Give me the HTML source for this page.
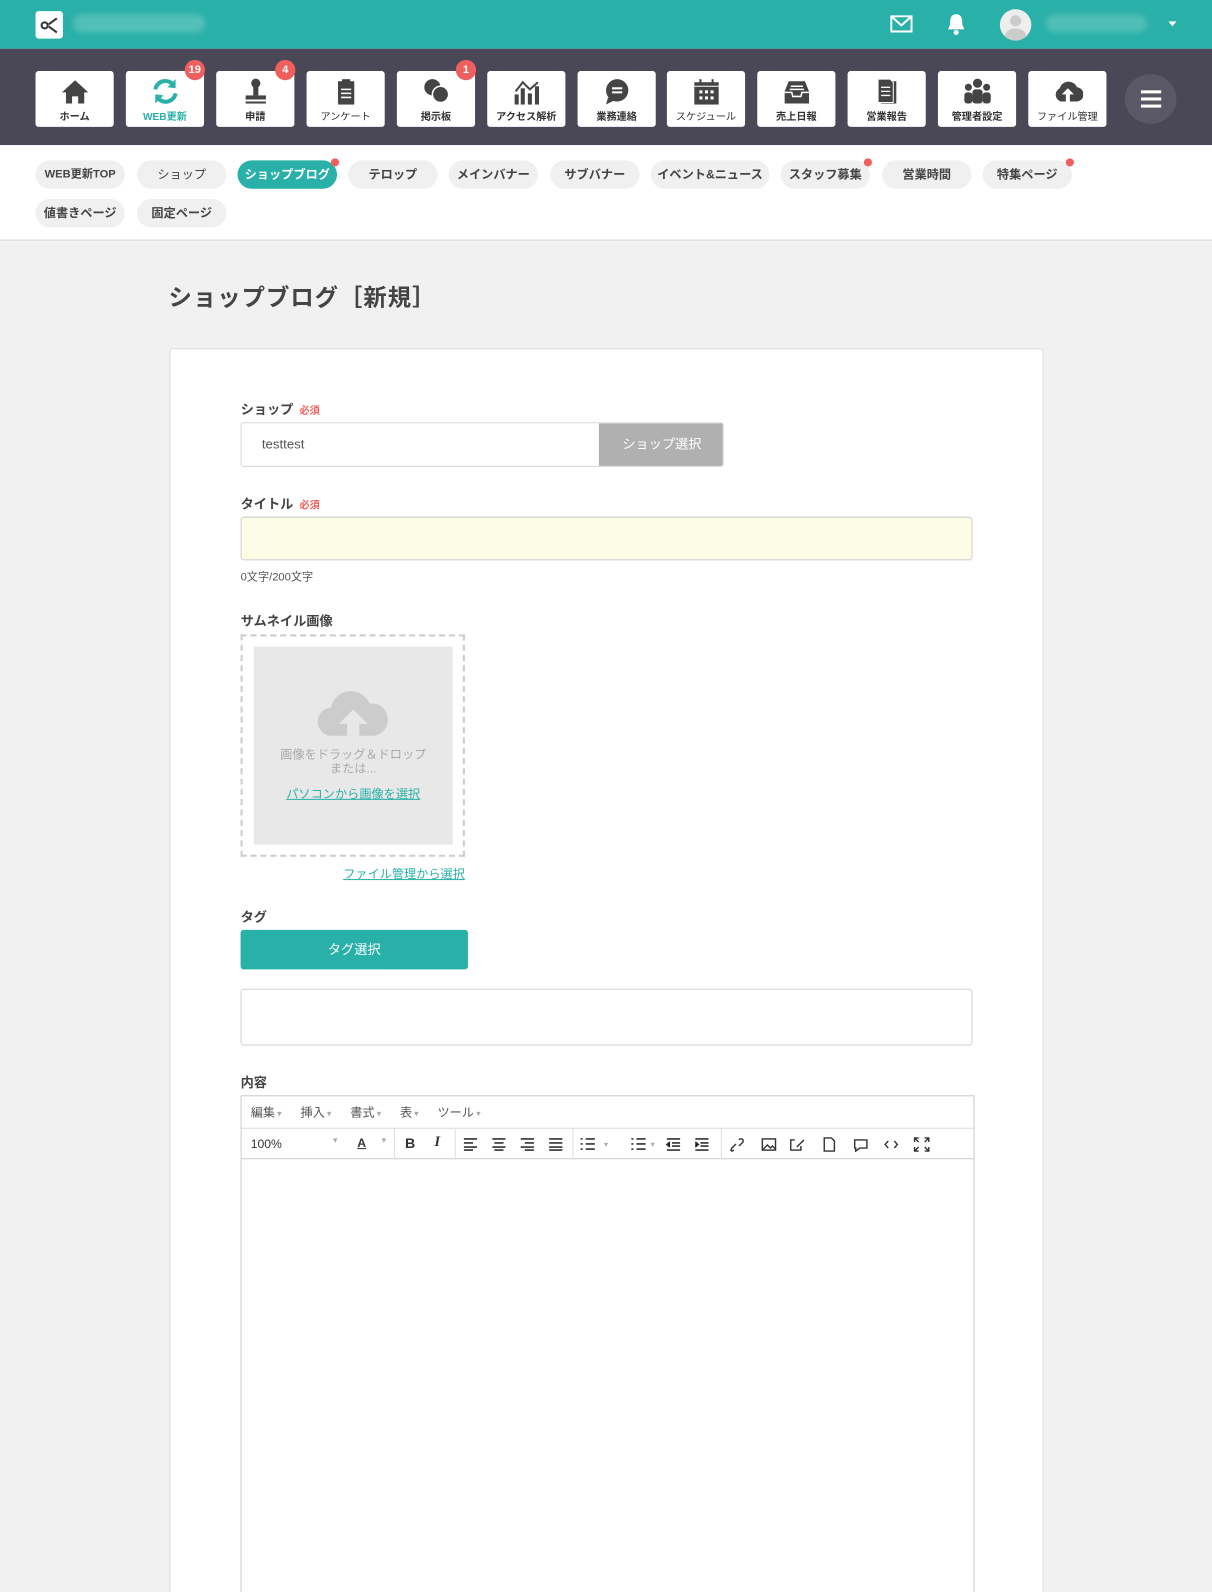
<!DOCTYPE html>
<html><head><meta charset="utf-8">
<style>
*{box-sizing:border-box;margin:0;padding:0}
html,body{width:1212px;height:1592px;overflow:hidden;background:#f1f1f1;font-family:"Liberation Sans","Noto Sans CJK JP",sans-serif;color:#444}
#w{width:1194px;height:1568px;transform:scale(1.01508);transform-origin:0 0;position:relative;background:#f1f1f1}
.abs{position:absolute}
#top{left:0;top:0;width:1194px;height:48px;background:#29b0a8}
#nav{left:0;top:48px;width:1194px;height:95px;background:#4a4857}
.nb{position:absolute;top:22px;width:77px;height:55px;background:#fff;border-radius:3px;text-align:center;font-size:10px;color:#333}
.nb svg{position:absolute;left:24px;top:6px}
.nb span{position:absolute;left:0;right:0;bottom:4px;font-weight:bold;font-size:10px}
.badge{position:absolute;top:-11px;right:-1px;min-width:20px;height:20px;border-radius:10px;background:#ef5f5d;color:#fff;font-size:11px;font-weight:bold;line-height:20px;text-align:center;padding:0 4px}
#sub{left:0;top:143px;width:1194px;height:94px;background:#fff;border-bottom:1px solid #d8d8d8}
.pill{position:absolute;height:28px;border-radius:14px;background:#f0f0f0;font-size:12px;font-weight:bold;line-height:28px;text-align:center;color:#444}
.pill.on{background:#29b0a8;color:#fff}
.dot{position:absolute;top:-2px;right:-2px;width:8px;height:8px;border-radius:4px;background:#ef5f5d}
h1{position:absolute;left:166px;top:274px;font-size:23px;font-weight:bold;color:#444;letter-spacing:1px}
#card{left:167px;top:343px;width:861px;height:1240px;background:#fff;border:1px solid #ddd;border-radius:3px}
.lbl{position:absolute;font-size:13px;font-weight:bold;color:#444}
.req{color:#ef5f5d;font-size:10px;margin-left:6px}
.mi{position:absolute;top:7px;font-size:12px;color:#555}
.mi small{color:#aaa;font-size:9px;margin-left:2px}
</style></head><body><div id="w">
<div id="top" class="abs">
 <div class="abs" style="left:35px;top:11px;width:27px;height:27px;background:#fff;border-radius:3px">
  <svg width="27" height="27"><circle cx="9" cy="14" r="3" fill="none" stroke="#333" stroke-width="2"/><path d="M13 13 L21 7 M13 15 L21 21" stroke="#333" stroke-width="2"/></svg></div>
 <div class="abs" style="left:72px;top:14px;width:130px;height:18px;background:rgba(255,255,255,.2);border-radius:9px;filter:blur(3px)"></div>
 <svg class="abs" style="left:877px;top:15px" width="22" height="18"><rect x="1" y="1" width="20" height="15" fill="none" stroke="#fff" stroke-width="2"/><path d="M1 1 L11 10 L21 1" fill="none" stroke="#fff" stroke-width="2"/></svg>
 <svg class="abs" style="left:931px;top:12px" width="22" height="24"><path d="M11 2 C5 2 5 8 5 12 L3 17 L19 17 L17 12 C17 8 17 2 11 2Z" fill="#fff"/><circle cx="11" cy="20" r="2.5" fill="#fff"/></svg>
 <div class="abs" style="left:985px;top:9px;width:31px;height:31px;border-radius:50%;background:#eee;overflow:hidden"><div class="abs" style="left:10px;top:6px;width:11px;height:11px;border-radius:50%;background:#ccc"></div><div class="abs" style="left:5px;top:19px;width:21px;height:16px;border-radius:50%;background:#ccc"></div></div>
 <div class="abs" style="left:1030px;top:14px;width:100px;height:18px;background:rgba(255,255,255,.18);border-radius:9px;filter:blur(3px)"></div>
 <div class="abs" style="left:1151px;top:21px;border:4px solid transparent;border-top:5px solid #fff"></div>
</div>
<div id="nav" class="abs">
 <div class="nb" style="left:35px"><svg width="30" height="28" viewBox="0 0 30 28"><path d="M15 3 L2 15 L6 15 L6 26 L12 26 L12 19 L18 19 L18 26 L24 26 L24 15 L28 15Z" fill="#444"/></svg><span>ホーム</span></div>
 <div class="nb" style="left:124px"><svg width="30" height="28" viewBox="0 0 30 28"><path d="M5 12 A10 10 0 0 1 23 8" fill="none" stroke="#29b0a8" stroke-width="4"/><path d="M25 2 L25 11 L17 10Z" fill="#29b0a8"/><path d="M25 16 A10 10 0 0 1 7 20" fill="none" stroke="#29b0a8" stroke-width="4"/><path d="M5 26 L5 17 L13 18Z" fill="#29b0a8"/></svg><span style="color:#29b0a8">WEB更新</span><div class="badge">19</div></div>
 <div class="nb" style="left:213px"><svg width="30" height="28" viewBox="0 0 30 28"><circle cx="15" cy="6" r="4.5" fill="#444"/><rect x="12.5" y="9" width="5" height="9" fill="#444"/><rect x="5" y="18" width="20" height="4" fill="#444"/><rect x="5" y="24" width="20" height="2" fill="#444"/></svg><span>申請</span><div class="badge">4</div></div>
 <div class="nb" style="left:302px"><svg width="30" height="28" viewBox="0 0 30 28"><rect x="7" y="4" width="16" height="23" fill="#444"/><rect x="11" y="2" width="8" height="4" fill="#444"/><path d="M10 12h10M10 16h10M10 20h10" stroke="#fff" stroke-width="1.5"/></svg><span style="font-weight:normal">アンケート</span></div>
 <div class="nb" style="left:391px"><svg width="30" height="28" viewBox="0 0 30 28"><circle cx="11" cy="10" r="8" fill="#444"/><circle cx="19" cy="17" r="8" fill="#444" stroke="#fff" stroke-width="1.5"/></svg><span>掲示板</span><div class="badge">1</div></div>
 <div class="nb" style="left:480px"><svg width="30" height="28" viewBox="0 0 30 28"><path d="M4 14 L11 5 L18 12 L26 5" fill="none" stroke="#444" stroke-width="2"/><rect x="3" y="17" width="4" height="10" fill="#444"/><rect x="9" y="11" width="4" height="16" fill="#444"/><rect x="16" y="16" width="4" height="11" fill="#444"/><rect x="23" y="9" width="4" height="18" fill="#444"/></svg><span>アクセス解析</span></div>
 <div class="nb" style="left:569px"><svg width="30" height="28" viewBox="0 0 30 28"><circle cx="15" cy="13" r="11" fill="#444"/><path d="M6 20 L4 27 L12 23Z" fill="#444"/><path d="M10 11h10M10 15h10" stroke="#fff" stroke-width="2"/></svg><span>業務連絡</span></div>
 <div class="nb" style="left:657px"><svg width="30" height="28" viewBox="0 0 30 28"><rect x="3" y="5" width="24" height="22" fill="#444"/><rect x="8" y="2" width="2" height="5" fill="#444"/><rect x="20" y="2" width="2" height="5" fill="#444"/><path d="M3 9h24" stroke="#fff"/><g fill="#fff"><rect x="8" y="13" width="3" height="3"/><rect x="13.5" y="13" width="3" height="3"/><rect x="19" y="13" width="3" height="3"/><rect x="8" y="19" width="3" height="3"/><rect x="13.5" y="19" width="3" height="3"/><rect x="19" y="19" width="3" height="3"/></g></svg><span style="font-weight:normal">スケジュール</span></div>
 <div class="nb" style="left:746px"><svg width="30" height="28" viewBox="0 0 30 28"><path d="M7 4 L23 4 L27 14 L27 26 L3 26 L3 14Z" fill="#444"/><path d="M9 9h12M8 12h14" stroke="#fff" stroke-width="1.5"/><path d="M3 15 L10 15 L11 19 L19 19 L20 15 L27 15" fill="none" stroke="#fff" stroke-width="1.5"/></svg><span>売上日報</span></div>
 <div class="nb" style="left:835px"><svg width="30" height="28" viewBox="0 0 30 28"><rect x="9" y="4" width="15" height="22" fill="#444"/><path d="M6 2 L18 2 L21 5 L21 25 L6 25Z" fill="#444" stroke="#fff"/><path d="M9 10h9M9 14h9M9 18h9" stroke="#fff" stroke-width="1.3"/></svg><span>営業報告</span></div>
 <div class="nb" style="left:924px"><svg width="30" height="28" viewBox="0 0 30 28"><circle cx="15" cy="6" r="4.5" fill="#444"/><circle cx="6" cy="10" r="3.5" fill="#444"/><circle cx="24" cy="10" r="3.5" fill="#444"/><rect x="10" y="12" width="10" height="14" rx="3" fill="#444"/><rect x="2" y="15" width="8" height="11" rx="3" fill="#444"/><rect x="20" y="15" width="8" height="11" rx="3" fill="#444"/></svg><span>管理者設定</span></div>
 <div class="nb" style="left:1013px"><svg width="30" height="28" viewBox="0 0 30 28"><path d="M8 24 A7 7 0 0 1 7 11 A9 9 0 0 1 24 10 A7 7 0 0 1 23 24Z" fill="#444"/><path d="M15 11 L9 17 L13 17 L13 24 L17 24 L17 17 L21 17Z" fill="#fff"/></svg><span style="font-weight:normal">ファイル管理</span></div>
 <div class="abs" style="left:1108px;top:25px;width:51px;height:49px;border-radius:50%;background:#5a5866"><div class="abs" style="left:16px;top:16px;width:20px;height:3px;background:#fff;box-shadow:0 7px 0 #fff,0 14px 0 #fff"></div></div>
</div>
<div id="sub" class="abs">
 <div class="pill" style="left:35px;top:15px;width:88px;font-size:11px">WEB更新TOP</div>
 <div class="pill" style="left:135px;top:15px;width:88px;font-weight:normal">ショップ</div>
 <div class="pill on" style="left:234px;top:15px;width:98px">ショップブログ<div class="dot"></div></div>
 <div class="pill" style="left:343px;top:15px;width:88px">テロップ</div>
 <div class="pill" style="left:442px;top:15px;width:88px">メインバナー</div>
 <div class="pill" style="left:542px;top:15px;width:88px">サブバナー</div>
 <div class="pill" style="left:641px;top:15px;width:117px">イベント&amp;ニュース</div>
 <div class="pill" style="left:769px;top:15px;width:88px">スタッフ募集<div class="dot"></div></div>
 <div class="pill" style="left:869px;top:15px;width:88px">営業時間</div>
 <div class="pill" style="left:968px;top:15px;width:88px">特集ページ<div class="dot"></div></div>
 <div class="pill" style="left:35px;top:53px;width:88px">値書きページ</div>
 <div class="pill" style="left:135px;top:53px;width:88px">固定ページ</div>
</div>
<h1>ショップブログ［新規］</h1>
<div id="card" class="abs"></div>
<div class="lbl" style="left:237px;top:393px">ショップ<span class="req">必須</span></div>
<div class="abs" style="left:237px;top:416px;width:476px;height:44px;border:1px solid #d8d8d8;border-radius:3px;background:#fff;overflow:hidden">
 <div class="abs" style="left:20px;top:13px;font-size:13px;color:#555">testtest</div>
 <div class="abs" style="left:352px;top:0;width:124px;height:44px;background:#b0b0b0;color:#fff;font-size:13px;line-height:42px;text-align:center">ショップ選択</div>
</div>
<div class="lbl" style="left:237px;top:486px">タイトル<span class="req">必須</span></div>
<div class="abs" style="left:237px;top:509px;width:721px;height:43px;border:1px solid #d0d0d0;border-radius:3px;background:#fdfce6"></div>
<div class="abs" style="left:237px;top:560px;font-size:11px;color:#555">0文字/200文字</div>
<div class="lbl" style="left:237px;top:601px">サムネイル画像</div>
<div class="abs" style="left:237px;top:625px;width:221px;height:219px;border:2px dashed #ccc"></div>
<div class="abs" style="left:250px;top:637px;width:196px;height:195px;background:#e8e8e8;text-align:center">
 <svg class="abs" style="left:62px;top:42px" width="72" height="46" viewBox="0 0 72 46"><path d="M16 46 A14 14 0 0 1 14 18 A20 20 0 0 1 52 14 A16 16 0 0 1 56 46Z" fill="#ccc"/><path d="M36 20 L22 34 L30 34 L30 46 L42 46 L42 34 L50 34Z" fill="#e8e8e8"/></svg>
 <div class="abs" style="left:0;right:0;top:99px;font-size:12px;color:#aaa;line-height:14px">画像をドラッグ＆ドロップ<br>または...</div>
 <div class="abs" style="left:0;right:0;top:136px;font-size:12px;color:#29b0a8;text-decoration:underline">パソコンから画像を選択</div>
</div>
<div class="abs" style="left:338px;top:852px;font-size:12px;color:#29b0a8;text-decoration:underline">ファイル管理から選択</div>
<div class="lbl" style="left:237px;top:893px">タグ</div>
<div class="abs" style="left:237px;top:916px;width:224px;height:39px;background:#29b0a8;border-radius:3px;color:#fff;font-size:13px;line-height:39px;text-align:center">タグ選択</div>
<div class="abs" style="left:237px;top:974px;width:721px;height:56px;border:1px solid #d0d0d0;border-radius:3px;background:#fff"></div>
<div class="lbl" style="left:237px;top:1056px">内容</div>
<div class="abs" style="left:237px;top:1079px;width:723px;height:500px;border:1px solid #ccc;background:#fff">
 <div class="mi" style="left:9px">編集<small>▾</small></div>
 <div class="mi" style="left:58px">挿入<small>▾</small></div>
 <div class="mi" style="left:107px">書式<small>▾</small></div>
 <div class="mi" style="left:156px">表<small>▾</small></div>
 <div class="mi" style="left:193px">ツール<small>▾</small></div>
 <div class="abs" style="left:0;top:31px;width:721px;height:31px;border-top:1px solid #ddd;border-bottom:1px solid #ccc;font-size:12px;color:#333">
  <div class="abs" style="left:9px;top:8px">100%</div>
  <div class="abs" style="left:90px;top:6px;color:#aaa;font-size:9px">▾</div>
  <div class="abs" style="left:114px;top:7px;text-decoration:underline;font-weight:bold">A</div>
  <div class="abs" style="left:138px;top:6px;color:#aaa;font-size:9px">▾</div>
  <div class="abs" style="left:150px;top:0;width:1px;height:30px;background:#ddd"></div>
  <div class="abs" style="left:161px;top:6px;font-weight:bold;font-size:14px">B</div>
  <div class="abs" style="left:190px;top:6px;font-style:italic;font-weight:bold;font-size:14px;font-family:'Liberation Serif',serif">I</div>
  <div class="abs" style="left:210px;top:0;width:1px;height:30px;background:#ddd"></div>
  <svg class="abs" style="left:218px;top:8px" width="110" height="14"><g stroke="#333" stroke-width="1.6"><path d="M1 2h13M1 6h9M1 10h13M1 13h9"/><path d="M29 2h13M31 6h9M29 10h13M31 13h9"/><path d="M57 2h13M61 6h9M57 10h13M61 13h9"/><path d="M85 2h13M85 6h13M85 10h13M85 13h13"/></g></svg>
  <div class="abs" style="left:326px;top:0;width:1px;height:30px;background:#ddd"></div>
  <svg class="abs" style="left:333px;top:8px" width="140" height="14"><g stroke="#333" stroke-width="1.6"><path d="M6 2h9M6 7h9M6 12h9M1 2h2M1 7h2M1 12h2"/><path d="M56 2h9M56 7h9M56 12h9M51 2h2M51 7h2M51 12h2"/><path d="M86 2h13M91 6h8M91 9h8M86 13h13M89 5l-3 2.5 3 2.5"/><path d="M114 2h13M119 6h8M119 9h8M114 13h13M114 5l3 2.5-3 2.5"/></g><text x="24" y="10" font-size="8" fill="#aaa">▾</text><text x="70" y="10" font-size="8" fill="#aaa">▾</text></svg>
  <div class="abs" style="left:472px;top:0;width:1px;height:30px;background:#ddd"></div>
  <svg class="abs" style="left:480px;top:8px" width="200" height="15"><g fill="none" stroke="#333" stroke-width="1.4"><path d="M3 11l4-4M5 13l-2 1-1-1 1-2 3-3M10 3l1-1 2 0 1 1 0 2-1 1-3 3"/><rect x="33" y="2" width="13" height="11"/><path d="M34 12l4-4 3 3 2-2 3 3"/><path d="M65 3h-4v10h10v-4M67 10l7-7"/><path d="M94 1h7l3 3v10h-10z"/><path d="M124 3h12v8h-7l-4 3v-3h-1z"/><path d="M157 4l-3 3.5 3 3.5M163 4l3 3.5-3 3.5"/><path d="M187 1h-4v4M193 1h4v4M187 14h-4v-4M193 14h4v-4M183 1l4 4M197 1l-4 4M183 14l4-4M197 14l-4-4"/></g></svg>
 </div>
</div>
</div></body></html>
